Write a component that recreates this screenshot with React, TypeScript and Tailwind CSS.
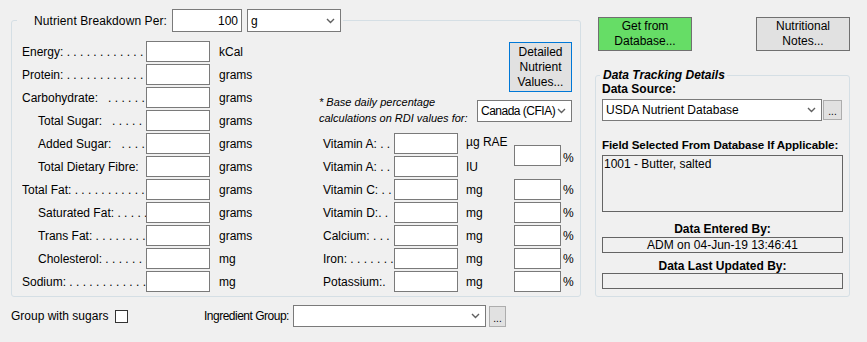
import React from "react";

const dots = " . . . . . . . . . . . . . . . . . . . . . . . .";

const leftRows = [
  { label: "Energy:" + dots, unit: "kCal", indent: false },
  { label: "Protein:" + dots, unit: "grams", indent: false },
  { label: "Carbohydrate:  " + dots, unit: "grams", indent: false },
  { label: "Total Sugar:  " + dots, unit: "grams", indent: true },
  { label: "Added Sugar:  " + dots, unit: "grams", indent: true },
  { label: "Total Dietary Fibre:", unit: "grams", indent: true },
  { label: "Total Fat:" + dots, unit: "grams", indent: false },
  { label: "Saturated Fat:" + dots, unit: "grams", indent: true },
  { label: "Trans Fat:" + dots, unit: "grams", indent: true },
  { label: "Cholesterol:" + dots, unit: "mg", indent: true },
  { label: "Sodium:" + dots, unit: "mg", indent: false },
];

const vitaminRows = [
  { label: "Vitamin C: . .", unit: "mg" },
  { label: "Vitamin D:. .", unit: "mg" },
  { label: "Calcium: . . .", unit: "mg" },
  { label: "Iron: . . . . . . .", unit: "mg" },
  { label: "Potassium:.", unit: "mg" },
];

function Chevron() {
  return (
    <svg width="9" height="6" viewBox="0 0 9 6" className="shrink-0">
      <polyline points="1,1 4.5,4.5 8,1" fill="none" stroke="#606060" strokeWidth="1.4" />
    </svg>
  );
}

function Combo({ text, className }: { text: string; className: string }) {
  return (
    <div className={`flex items-center justify-between border border-[#7a7a7a] bg-white pl-[3px] pr-[5px] ${className}`}>
      <span className="whitespace-nowrap">{text}</span>
      <Chevron />
    </div>
  );
}

function Box({ className = "" }: { className?: string }) {
  return <div className={`h-[21px] border border-[#7a7a7a] bg-white ${className}`} />;
}

function DotsButton({ className = "" }: { className?: string }) {
  return (
    <div className={`flex items-end justify-center border border-[#adadad] bg-[#e1e1e1] pb-[2px] text-[10px] leading-[10px] ${className}`}>
      ...
    </div>
  );
}

export default function App() {
  return (
    <div className="relative h-[342px] w-[867px] overflow-hidden bg-[#f0f0f0] pl-[11px] pt-[9px] font-['Liberation_Sans',Arial,sans-serif] text-[12px] leading-[14px] text-black">
      <div className="flex">
        {/* nutrient breakdown group */}
        <fieldset className="w-[570px] rounded-[3px] border border-[#d5dfe5] pb-[4px] pl-[10px] pr-[8px]">
          <legend className="-ml-[5px] flex items-center pl-[17px] pr-[2px]">
            <span className="whitespace-nowrap tracking-[0.1px]">Nutrient Breakdown Per:</span>
            <div className="ml-[5px] flex h-[23px] w-[70px] items-center justify-end border border-[#7a7a7a] bg-white pr-[3px]">
              100
            </div>
            <Combo text="g" className="ml-[5px] h-[23px] w-[94px]" />
          </legend>

          <div className="flex pt-[9px]">
            <div className="grid w-[297px] auto-rows-[21px] grid-cols-[124px_64px_auto] gap-y-[2px]">
              {leftRows.map((r) => (
                <React.Fragment key={r.label}>
                  <div className={`flex items-center overflow-hidden whitespace-pre ${r.indent ? "pl-[16px]" : ""}`}>
                    {r.label}
                  </div>
                  <Box />
                  <div className="flex items-center pl-[9px]">{r.unit}</div>
                </React.Fragment>
              ))}
            </div>

            <div className="flex w-[253px] flex-col">
              <div className="flex h-[92px] flex-col">
                <div className="mt-[1px] flex h-[50px] w-[63px] flex-col items-center justify-center self-end border border-[#0078d7] bg-[#e1e1e1] text-center leading-[15px]">
                  <span>Detailed</span>
                  <span>Nutrient</span>
                  <span>Values...</span>
                </div>
                <div className="mt-[2px] flex items-start justify-between">
                  <p className="text-[11px] italic leading-[16px]">
                    * Base daily percentage
                    <br />
                    calculations on RDI values for:
                  </p>
                  <Combo text="Canada (CFIA)" className="mt-[6px] h-[22px] w-[95px] tracking-[-0.5px]" />
                </div>
              </div>

              <div className="grid auto-rows-[21px] grid-cols-[75px_64px_56px_47px_auto] gap-y-[2px]">
                <div className="flex items-center whitespace-pre pl-[4px]">Vitamin A: . .</div>
                <Box />
                <div className="flex items-start pl-[8px] pt-[2px]">µg RAE</div>
                <Box className="row-span-2 self-center" />
                <div className="row-span-2 flex items-center self-center pl-[2px] pt-[6px]">%</div>
                <div className="flex items-center whitespace-pre pl-[4px]">Vitamin A: . .</div>
                <Box />
                <div className="flex items-center pl-[8px]">IU</div>
                {vitaminRows.map((r) => (
                  <React.Fragment key={r.label}>
                    <div className="flex items-center whitespace-pre pl-[4px]">{r.label}</div>
                    <Box />
                    <div className="flex items-center pl-[8px]">{r.unit}</div>
                    <Box />
                    <div className="flex items-center pl-[2px]">%</div>
                  </React.Fragment>
                ))}
              </div>
            </div>
          </div>
        </fieldset>

        {/* right column */}
        <div className="ml-[13px] flex w-[256px] flex-col">
          <div className="mt-[8px] flex">
            <div className="ml-[4px] flex h-[34px] w-[94px] flex-col items-center justify-center border border-[#707070] bg-[#66dd66] leading-[15px]">
              <span>Get from</span>
              <span>Database...</span>
            </div>
            <div className="ml-auto flex h-[34px] w-[94px] flex-col items-center justify-center border border-[#707070] bg-[#e1e1e1] leading-[15px]">
              <span>Nutritional</span>
              <span>Notes...</span>
            </div>
          </div>

          <fieldset className="ml-[1px] mt-[17px] rounded-[3px] border border-[#d5dfe5] pb-[7px] pl-[6px] pr-[6px]">
            <legend className="-ml-[2px] pl-[3px] pr-[2px] font-bold italic">Data Tracking Details</legend>
            <div className="font-bold">Data Source:</div>
            <div className="mt-[3px] flex items-start">
              <Combo text="USDA Nutrient Database" className="h-[22px] w-[220px]" />
              <DotsButton className="ml-[1px] mt-[1px] h-[20px] w-[19px]" />
            </div>
            <div className="mt-[17px] whitespace-nowrap text-[11.6px] font-bold tracking-[-0.1px]">
              Field Selected From Database If Applicable:
            </div>
            <div className="mt-[3px] h-[57px] w-[241px] border border-[#646464] bg-[#f0f0f0] px-[1px] pt-[1px]">
              1001 - Butter, salted
            </div>
            <div className="mt-[10px] w-[241px] text-center font-bold">Data Entered By:</div>
            <div className="mt-[1px] flex h-[16px] w-[241px] items-center justify-center border border-[#646464]">
              ADM on 04-Jun-19 13:46:41
            </div>
            <div className="mt-[6px] w-[241px] text-center font-bold">Data Last Updated By:</div>
            <div className="h-[16px] w-[241px] border border-[#646464]" />
          </fieldset>
        </div>
      </div>

      {/* bottom row */}
      <div className="mt-[8px] flex h-[22px] items-center">
        <span className="w-[104px] whitespace-nowrap">Group with sugars</span>
        <div className="h-[13px] w-[13px] border border-[#333333] bg-white" />
        <span className="ml-[76px] w-[89px] whitespace-nowrap tracking-[-0.5px]">Ingredient Group:</span>
        <Combo text="" className="h-[22px] w-[193px]" />
        <DotsButton className="ml-[3px] h-[21px] w-[17px]" />
      </div>
    </div>
  );
}
